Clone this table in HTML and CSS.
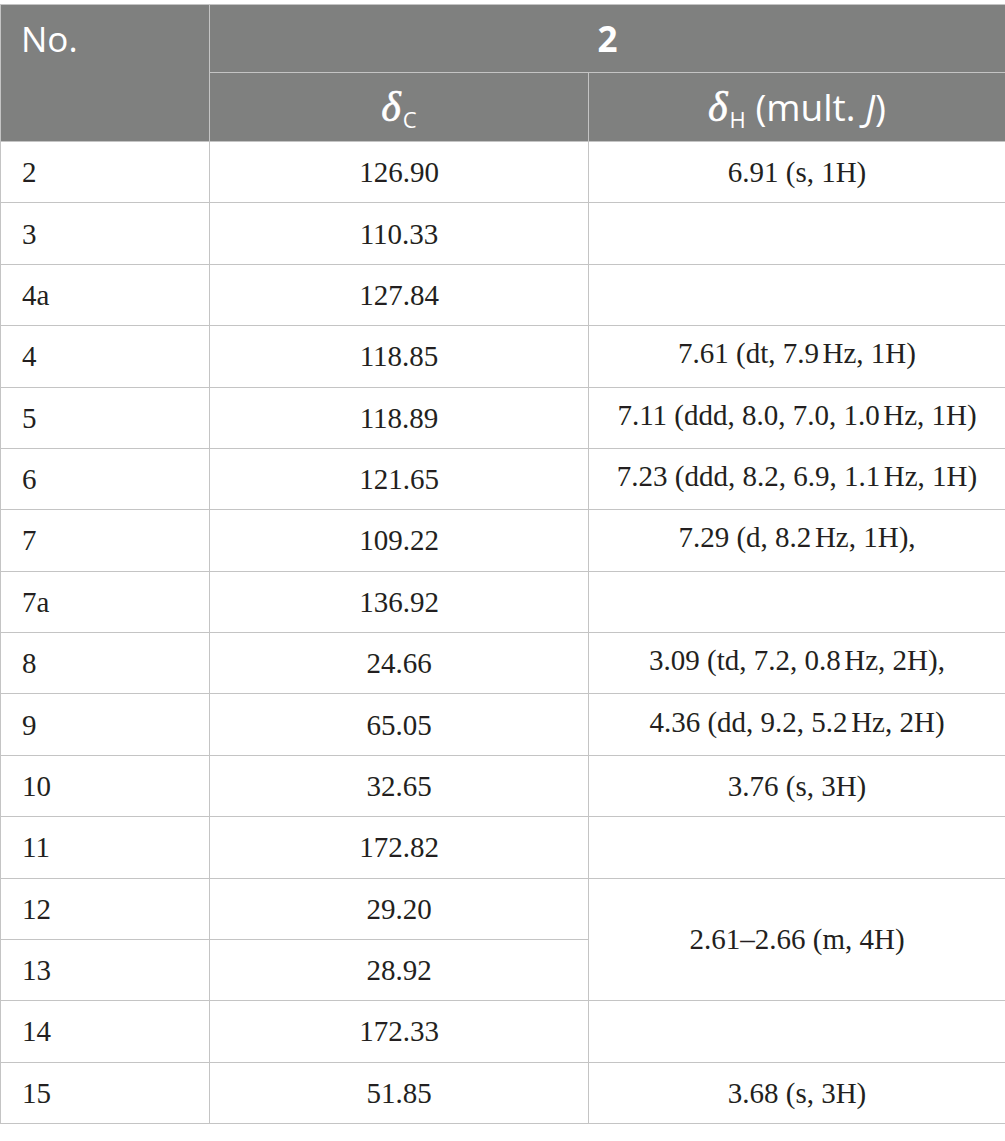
FILE: index.html
```html
<!DOCTYPE html>
<html>
<head>
<meta charset="utf-8">
<link rel="stylesheet" href="styles.css">
</head>
<body>
<table class="nmr">
  <colgroup>
    <col class="c1">
    <col class="c2">
    <col class="c3">
  </colgroup>
  <thead>
    <tr class="h1">
      <th rowspan="2" class="no">No.</th>
      <th colspan="2" class="cmp">2</th>
    </tr>
    <tr class="h2">
      <th><span class="delta">δ</span><sub>C</sub></th>
      <th><span class="delta">δ</span><sub>H</sub> (mult. <i>J</i>)</th>
    </tr>
  </thead>
  <tbody>
    <tr><td>2</td><td>126.90</td><td>6.91 (s, 1H)</td></tr>
    <tr><td>3</td><td>110.33</td><td></td></tr>
    <tr><td>4a</td><td>127.84</td><td></td></tr>
    <tr><td>4</td><td>118.85</td><td>7.61 (dt, 7.9<span class="thin"> </span>Hz, 1H)</td></tr>
    <tr><td>5</td><td>118.89</td><td>7.11 (ddd, 8.0, 7.0, 1.0<span class="thin"> </span>Hz, 1H)</td></tr>
    <tr><td>6</td><td>121.65</td><td>7.23 (ddd, 8.2, 6.9, 1.1<span class="thin"> </span>Hz, 1H)</td></tr>
    <tr><td>7</td><td>109.22</td><td>7.29 (d, 8.2<span class="thin"> </span>Hz, 1H),</td></tr>
    <tr><td>7a</td><td>136.92</td><td></td></tr>
    <tr><td>8</td><td>24.66</td><td>3.09 (td, 7.2, 0.8<span class="thin"> </span>Hz, 2H),</td></tr>
    <tr><td>9</td><td>65.05</td><td>4.36 (dd, 9.2, 5.2<span class="thin"> </span>Hz, 2H)</td></tr>
    <tr><td>10</td><td>32.65</td><td>3.76 (s, 3H)</td></tr>
    <tr><td>11</td><td>172.82</td><td></td></tr>
    <tr><td>12</td><td>29.20</td><td rowspan="2">2.61–2.66 (m, 4H)</td></tr>
    <tr><td>13</td><td>28.92</td></tr>
    <tr><td>14</td><td>172.33</td><td></td></tr>
    <tr><td>15</td><td>51.85</td><td>3.68 (s, 3H)</td></tr>
  </tbody>
</table>
</body>
</html>
```

FILE: styles.css
```css
html, body {
  margin: 0;
  padding: 0;
  background: #ffffff;
}
body {
  padding-top: 4px;
}
.nmr {
  border-collapse: collapse;
  width: 1005px;
  table-layout: fixed;
  font-family: "Liberation Serif", "Times New Roman", serif;
  color: #231f20;
}
.c1 { width: 209px; }
.c2 { width: 379px; }
.c3 { width: 417px; }
.nmr th, .nmr td {
  border: 1px solid #c4c4c4;
  padding: 0;
}
.nmr th {
  background: #7f807f;
  color: #ffffff;
  font-family: "Open Sans", "DejaVu Sans", sans-serif;
  font-weight: 400;
  font-size: 35px;
  line-height: 40px;
}
.h1 th { height: 67px; }
.h2 th { height: 68px; font-size: 37px; }
.nmr th.no {
  text-align: left;
  vertical-align: top;
  padding: 14px 0 0 20px;
  font-size: 35px;
}
.nmr th.cmp {
  font-weight: 700;
  text-align: center;
}
.delta {
  font-family: "Liberation Serif", "Times New Roman", serif;
  font-style: italic;
  font-size: 42px;
  -webkit-text-stroke: 0.6px #ffffff;
}
.nmr sub {
  font-size: 22px;
  vertical-align: -7px;
  line-height: 0;
  margin-left: 2px;
}
.nmr th i {
  font-style: italic;
}
.nmr td {
  height: 60.375px;
  font-size: 29px;
  line-height: 32px;
  text-align: center;
  vertical-align: middle;
}
.nmr td:first-child {
  text-align: left;
  padding-left: 21px;
}
.nmr td[rowspan] {
  text-align: center;
  padding-left: 0;
}
.thin {
  font-size: 14px;
}
```
